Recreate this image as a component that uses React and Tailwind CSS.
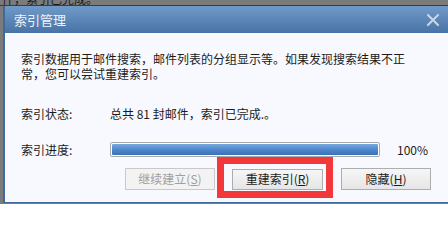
export default function App() {
  const font = { fontFamily: '"Noto Sans CJK SC", "Liberation Sans", sans-serif' };
  return (
    <div className="relative w-[448px] h-[204px] overflow-hidden bg-[#7b7b7b]" style={font}>
      {/* window behind */}
      <div className="h-[5px] overflow-hidden">
        <div className="-mt-[9px] pl-[2px] text-[12px] leading-[15px] text-[#1a1a1a] whitespace-nowrap">
          件，索引已完成。
        </div>
      </div>
      <div className="h-px bg-[#3c3c3c]" />

      {/* dialog */}
      <div className="ml-[3px] w-[460px] border-l-2 border-b border-[#3f6a9e] bg-[#f7f9fe]">
        <div className="h-[27px] flex items-center justify-between pl-[9px] pr-[24px] bg-gradient-to-b from-[#6f9ac8] to-[#4873a6]">
          <span className="text-[13px] leading-none text-[#eef3fa]">索引管理</span>
          <svg width="12" height="12" viewBox="0 0 12 12" className="mt-[1px]">
            <path d="M1 1L11 11M11 1L1 11" stroke="#c9d6e7" strokeWidth="2" strokeLinecap="square" />
          </svg>
        </div>

        <div className="h-[169px] pl-[16px] pt-[18px] text-[12px] text-[#1c1c1c]">
          <p className="w-[395px] leading-[15px]">
            索引数据用于邮件搜索，邮件列表的分组显示等。如果发现搜索结果不正常，您可以尝试重建索引。
          </p>

          <div className="mt-[25px] flex items-center h-[15px]">
            <span className="w-[89px]">索引状态:</span>
            <span>总共 81 封邮件，索引已完成.。</span>
          </div>

          <div className="mt-[21px] flex items-center h-[15px]">
            <span className="w-[89px]">索引进度:</span>
            <div className="w-[270px] h-[15px] rounded-[2px] border border-[#a9a9a9] bg-white p-px">
              <div className="h-full rounded-[1px] bg-gradient-to-b from-[#78aae0] via-[#4f88cc] to-[#3a72b9]" />
            </div>
            <span className="ml-[17px]">100%</span>
          </div>

          <div className="mt-[11px] flex items-center h-[22px] pl-[104px]">
            <button className="w-[90px] h-[22px] border border-[#c9c9c9] bg-[#f3f3f3] text-[#9f9f9f] leading-none">
              继续建立(<span className="underline">S</span>)
            </button>
            <button className="ml-[17px] w-[91px] h-[21px] border border-[#adadad] bg-gradient-to-b from-[#f6f6f6] to-[#e6e6e6] text-[#1c1c1c] leading-none">
              重建索引(<span className="underline">R</span>)
            </button>
            <button className="ml-[18px] w-[90px] h-[22px] border border-[#adadad] bg-gradient-to-b from-[#f6f6f6] to-[#e6e6e6] text-[#1c1c1c] leading-none">
              隐藏(<span className="underline">H</span>)
            </button>
          </div>
        </div>
      </div>

      {/* annotation */}
      <div className="absolute left-[217px] top-[157px] w-[116px] h-[41px] border-[7px] border-[#f2383b]" />
    </div>
  );
}
